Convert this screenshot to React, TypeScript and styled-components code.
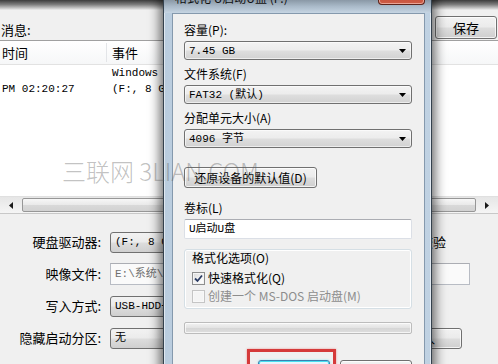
import React from "react";
import styled, { createGlobalStyle } from "styled-components";

const CJK = `"Noto Sans CJK SC", "Liberation Sans", sans-serif`;
const MONO = `"Liberation Mono", "Noto Sans CJK SC", monospace`;

const Global = createGlobalStyle`
  html, body { margin: 0; padding: 0; width: 498px; height: 364px; overflow: hidden; background: #f0f0f0; }
  #root { width: 498px; height: 364px; position: relative; overflow: hidden; }
  * { box-sizing: border-box; }
`;

const Screen = styled.div`
  position: relative;
  width: 498px;
  height: 364px;
  overflow: hidden;
  background: #f0f0f0;
  font-family: ${CJK};
  color: #000;
`;

/* ---------- background window ---------- */
const BackWindow = styled.div`
  display: flex;
  flex-direction: column;
  height: 100%;
`;

const TopStrip = styled.div`
  height: 10px;
  background: linear-gradient(#3c3c3c, #7d7d7d 45%, #d9d9d9 90%, #eeeeee);
`;

const MessageBar = styled.div`
  height: 30px;
  display: flex;
  align-items: flex-end;
  justify-content: space-between;
  padding: 0 1px 1px 1px;
`;

const MsgLabel = styled.span`
  font-size: 13px;
  line-height: 16px;
  margin-bottom: 1px;
`;

const WinButton = styled.div<{ $w: number; $h?: number; $offset?: number }>`
  width: ${(p) => p.$w}px;
  height: ${(p) => p.$h ?? 23}px;
  margin-left: ${(p) => p.$offset ?? 0}px;
  display: flex;
  align-items: center;
  justify-content: center;
  border: 1px solid #707070;
  border-radius: 3px;
  background: linear-gradient(#f2f2f2 0%, #ebebeb 48%, #dddddd 52%, #cfcfcf 100%);
  box-shadow: inset 0 0 0 1px rgba(255, 255, 255, 0.75);
  font-family: ${CJK};
  font-size: 13px;
  line-height: 16px;
  color: #000;
  flex: none;
`;

const LogList = styled.div`
  display: flex;
  flex-direction: column;
  height: 174px;
  border-top: 1px solid #a0a0a0;
  border-bottom: 1px solid #c8c8c8;
  background: #fff;
`;

const LogHeader = styled.div`
  height: 24px;
  display: flex;
  border-bottom: 1px solid #e2e2e2;
  background: linear-gradient(#ffffff, #f6f7f8);
`;

const HeaderCell = styled.div<{ $w?: number }>`
  ${(p) => (p.$w ? `width: ${p.$w}px; flex: none;` : "flex: 1;")}
  display: flex;
  align-items: center;
  padding-left: ${(p) => (p.$w ? 2 : 5)}px;
  font-size: 13px;
  line-height: 16px;
  border-right: ${(p) => (p.$w ? "1px solid #e3e5e8" : "none")};
  margin: 2px 0;
`;

const LogBody = styled.div`
  flex: 1;
  display: flex;
  flex-direction: column;
`;

const LogRow = styled.div`
  display: flex;
  height: 16px;
  font-family: ${MONO};
  font-size: 11px;
  line-height: 16px;
  white-space: nowrap;
`;

const LogTime = styled.div`
  width: 107px;
  flex: none;
  padding-left: 2px;
  overflow: hidden;
`;

const LogEvent = styled.div`
  flex: 1;
  padding-left: 5px;
  overflow: hidden;
`;

const HScroll = styled.div`
  height: 17px;
  display: flex;
  align-items: stretch;
  background: linear-gradient(#e6e6e6, #f5f5f5);
  border-top: 1px solid #e0e0e0;
`;

const ScrollArrow = styled.div`
  width: 22px;
  flex: none;
  display: flex;
  align-items: center;
  justify-content: center;
`;

const ScrollThumb = styled.div`
  flex: 1;
  margin: 1px 0;
  border: 1px solid #979797;
  border-radius: 2px;
  background: linear-gradient(#f7f7f7, #e9e9e9 50%, #d9d9d9 51%, #d2d2d2);
`;

const Form = styled.div`
  display: flex;
  flex-direction: column;
  gap: 10px;
  padding-top: 17px;
`;

const FormRow = styled.div`
  height: 22px;
  display: flex;
  align-items: center;
`;

const FormLabel = styled.div`
  width: 101px;
  flex: none;
  text-align: right;
  font-size: 13px;
  line-height: 16px;
  margin-right: 9px;
`;

const BgCombo = styled.div<{ $w: number }>`
  width: ${(p) => p.$w}px;
  height: 21px;
  flex: none;
  display: flex;
  align-items: center;
  padding-left: 4px;
  border: 1px solid #707070;
  border-radius: 3px;
  background: linear-gradient(#f2f2f2 0%, #ebebeb 48%, #dddddd 52%, #cfcfcf 100%);
  font-family: ${MONO};
  font-size: 11px;
  line-height: 16px;
  white-space: nowrap;
  overflow: hidden;
`;

const BgInput = styled.div<{ $w: number }>`
  width: ${(p) => p.$w}px;
  height: 22px;
  flex: none;
  display: flex;
  align-items: center;
  padding-left: 4px;
  border: 1px solid #b8bcc4;
  border-top-color: #abadb3;
  background: #fafafa;
  color: #707070;
  font-family: ${MONO};
  font-size: 11px;
  line-height: 16px;
  white-space: nowrap;
  overflow: hidden;
`;

const VerifyCheck = styled.div`
  display: flex;
  align-items: center;
  gap: 3px;
  margin-left: 12px;
  font-size: 13px;
  line-height: 16px;
`;

const Watermark = styled.div`
  position: absolute;
  left: 62px;
  top: 156px;
  font-family: ${CJK};
  font-weight: 200;
  font-size: 24px;
  line-height: 30px;
  color: rgba(95, 95, 95, 0.4);
  white-space: nowrap;
  pointer-events: none;
  z-index: 5;
`;

/* ---------- format dialog ---------- */
const Dialog = styled.div`
  position: absolute;
  left: 163px;
  top: -22px;
  width: 269px;
  height: 420px;
  display: flex;
  flex-direction: column;
  padding: 0 6px 0 8px;
  background: linear-gradient(90deg, #b9ccde, #cddcea 50%, #bfd1e2);
  border: 1px solid #34414d;
  border-radius: 7px 7px 0 0;
  box-shadow: 0 0 12px 3px rgba(0, 0, 0, 0.6), inset 0 0 0 1px rgba(255, 255, 255, 0.55);
  z-index: 2;
`;

const TitleBar = styled.div`
  height: 34px;
  flex: none;
  display: flex;
  align-items: flex-start;
  justify-content: space-between;
  margin: 0 -6px 0 -8px;
  padding: 0 6px 0 8px;
  background: linear-gradient(#4d5862 0%, #6d7a86 45%, #a9b9c8 80%, #c6d5e3 100%);
  border-radius: 6px 6px 0 0;
`;

const TitleText = styled.div`
  padding: 12px 0 0 3px;
  font-size: 12px;
  line-height: 14px;
  color: #111;
  white-space: nowrap;
`;

const CloseButton = styled.div`
  width: 47px;
  height: 26px;
  display: flex;
  align-items: center;
  justify-content: center;
  background: linear-gradient(#e9a999 0%, #d8735d 45%, #c5452f 55%, #cd5e47 100%);
  border: 1px solid #5e241b;
  border-top: none;
  border-radius: 0 0 4px 4px;
  box-shadow: inset 0 0 0 1px rgba(255, 210, 200, 0.6);
  color: #fff;
  font-size: 13px;
  font-weight: bold;
  font-family: "DejaVu Sans", sans-serif;
`;

const Panel = styled.div`
  flex: 1;
  display: flex;
  flex-direction: column;
  background: #f0f0f0;
  border: 1px solid #8599ad;
  border-bottom: none;
  padding: 9px 12px 0 11px;
`;

const FieldLabel = styled.div<{ $gap?: number }>`
  font-size: 12px;
  line-height: 14px;
  margin-top: ${(p) => p.$gap ?? 0}px;
  margin-bottom: 4px;
  white-space: nowrap;
`;

const Combo = styled.div`
  height: 19px;
  display: flex;
  align-items: center;
  justify-content: space-between;
  padding: 0 5px 0 4px;
  border: 1px solid #707070;
  border-radius: 3px;
  background: linear-gradient(#f3f3f3 0%, #ececec 48%, #dedede 52%, #d2d2d2 100%);
  box-shadow: inset 0 0 0 1px rgba(255, 255, 255, 0.6);
  font-family: ${MONO};
  font-size: 11px;
  line-height: 14px;
  white-space: nowrap;
`;

const TextBox = styled.div`
  height: 20px;
  display: flex;
  align-items: center;
  padding-left: 4px;
  border: 1px solid #dbdfe6;
  border-top-color: #abadb3;
  background: #fff;
  border-radius: 2px;
  font-family: ${MONO};
  font-size: 11px;
  line-height: 14px;
`;

const ButtonSlot = styled.div<{ $gap: number }>`
  margin-top: ${(p) => p.$gap}px;
  display: flex;
`;

const DlgButton = styled.div<{ $w: number; $h?: number; $default?: boolean }>`
  width: ${(p) => p.$w}px;
  height: ${(p) => p.$h ?? 21}px;
  flex: none;
  display: flex;
  align-items: center;
  justify-content: center;
  border: 1px solid ${(p) => (p.$default ? "#3c7fb1" : "#707070")};
  border-radius: 3px;
  background: ${(p) =>
    p.$default
      ? "linear-gradient(#eaf6fd 0%, #d9f0fc 48%, #bee6fd 52%, #a7d9f5 100%)"
      : "linear-gradient(#f2f2f2 0%, #ebebeb 48%, #dddddd 52%, #cfcfcf 100%)"};
  box-shadow: ${(p) =>
    p.$default ? "inset 0 0 0 1px #48e0f0, 0 0 2px #7fe6f2" : "inset 0 0 0 1px rgba(255,255,255,0.75)"};
  font-size: 12px;
  line-height: 14px;
  white-space: nowrap;
`;

const Group = styled.div`
  margin-top: 10px;
  border: 1px solid #d5dfe5;
  border-radius: 3px;
  box-shadow: inset 0 0 0 1px #fff;
  padding: 1px 0 4px 7px;
  display: flex;
  flex-direction: column;
  gap: 2px;
`;

const GroupLabel = styled.div`
  font-size: 12px;
  line-height: 14px;
  margin-bottom: 3px;
`;

const CheckRow = styled.div<{ $disabled?: boolean }>`
  height: 16px;
  display: flex;
  align-items: center;
  gap: 3px;
  font-size: 12px;
  line-height: 14px;
  white-space: nowrap;
  color: ${(p) => (p.$disabled ? "#8d8d8d" : "#000")};
`;

const CheckBoxFrame = styled.div<{ $disabled?: boolean }>`
  width: 13px;
  height: 13px;
  flex: none;
  display: flex;
  align-items: center;
  justify-content: center;
  border: 1px solid ${(p) => (p.$disabled ? "#c5c5c5" : "#8e8f8f")};
  background: ${(p) =>
    p.$disabled ? "#f4f4f4" : "linear-gradient(135deg, #d8d8d8, #f6f6f6 60%, #ffffff)"};
  box-shadow: inset 0 0 0 1px ${(p) => (p.$disabled ? "#f8f8f8" : "#f4f4f4")};
`;

const Progress = styled.div`
  margin-top: 13px;
  height: 12px;
  border: 1px solid #bcbcbc;
  border-radius: 2px;
  background: linear-gradient(#f3f3f3, #e2e2e2 50%, #d6d6d6 51%, #dedede);
  box-shadow: inset 0 0 0 1px rgba(255, 255, 255, 0.7);
`;

const ButtonRow = styled.div`
  margin-top: 26px;
  display: flex;
  justify-content: flex-end;
  gap: 10px;
`;

const Highlight = styled.div`
  position: relative;
  &::before {
    content: "";
    position: absolute;
    left: -11px;
    top: -11px;
    right: -6px;
    bottom: -12px;
    border: 3px solid #d53a3a;
    box-shadow: 0 0 2px rgba(230, 80, 80, 0.6);
    pointer-events: none;
  }
`;

const Arrow = () => (
  <svg width="7" height="4" viewBox="0 0 7 4">
    <polygon points="0,0 7,0 3.5,4" fill="#000" />
  </svg>
);

const CheckMark = () => (
  <svg width="9" height="9" viewBox="0 0 9 9">
    <path d="M1 4.5 L3.5 7 L8 1.5" stroke="#2b3c64" strokeWidth="1.8" fill="none" />
  </svg>
);

const SmallBox = styled.div`
  width: 13px;
  height: 13px;
  border: 1px solid #8e8f8f;
  background: linear-gradient(135deg, #dcdcdc, #fff);
`;

export default function App() {
  return (
    <>
      <Global />
      <Screen>
        <BackWindow>
          <TopStrip />
          <MessageBar>
            <MsgLabel>消息:</MsgLabel>
            <WinButton $w={62}>保存</WinButton>
          </MessageBar>
          <LogList>
            <LogHeader>
              <HeaderCell $w={107}>时间</HeaderCell>
              <HeaderCell>事件</HeaderCell>
            </LogHeader>
            <LogBody>
              <LogRow>
                <LogTime></LogTime>
                <LogEvent>Windows 7 v6.1 Build 7601 (Service Pack 1)</LogEvent>
              </LogRow>
              <LogRow>
                <LogTime>PM 02:20:27</LogTime>
                <LogEvent>(F:, 8 GB)Kingston DataTraveler 3.0 PMAP</LogEvent>
              </LogRow>
            </LogBody>
            <HScroll>
              <ScrollArrow>
                <svg width="4" height="7" viewBox="0 0 4 7">
                  <polygon points="4,0 4,7 0,3.5" fill="#1a1a1a" />
                </svg>
              </ScrollArrow>
              <ScrollThumb />
              <ScrollArrow>
                <svg width="4" height="7" viewBox="0 0 4 7">
                  <polygon points="0,0 0,7 4,3.5" fill="#1a1a1a" />
                </svg>
              </ScrollArrow>
            </HScroll>
          </LogList>
          <Form>
            <FormRow>
              <FormLabel>硬盘驱动器:</FormLabel>
              <BgCombo $w={282}>(F:, 8 GB)Kingston DataTraveler 3.0</BgCombo>
              <VerifyCheck>
                <SmallBox />
                校验
              </VerifyCheck>
            </FormRow>
            <FormRow>
              <FormLabel>映像文件:</FormLabel>
              <BgInput $w={360}>E:\系统\win7\cn_windows_7_ultimate.iso</BgInput>
            </FormRow>
            <FormRow>
              <FormLabel>写入方式:</FormLabel>
              <BgCombo $w={282}>USB-HDD+</BgCombo>
            </FormRow>
            <FormRow>
              <FormLabel>隐藏启动分区:</FormLabel>
              <BgCombo $w={262}>无</BgCombo>
              <WinButton $w={80} $h={21} $offset={10}>
                写入
              </WinButton>
            </FormRow>
          </Form>
        </BackWindow>

        <Dialog>
          <TitleBar>
            <TitleText>格式化 U启动U盘 (F:)</TitleText>
            <CloseButton>✕</CloseButton>
          </TitleBar>
          <Panel>
            <FieldLabel>容量(P):</FieldLabel>
            <Combo>
              <span>7.45 GB</span>
              <Arrow />
            </Combo>
            <FieldLabel $gap={7}>文件系统(F)</FieldLabel>
            <Combo>
              <span>FAT32 (默认)</span>
              <Arrow />
            </Combo>
            <FieldLabel $gap={7}>分配单元大小(A)</FieldLabel>
            <Combo>
              <span>4096 字节</span>
              <Arrow />
            </Combo>
            <ButtonSlot $gap={19}>
              <DlgButton $w={133}>还原设备的默认值(D)</DlgButton>
            </ButtonSlot>
            <FieldLabel $gap={13}>卷标(L)</FieldLabel>
            <TextBox>U启动U盘</TextBox>
            <Group>
              <GroupLabel>格式化选项(O)</GroupLabel>
              <CheckRow>
                <CheckBoxFrame>
                  <CheckMark />
                </CheckBoxFrame>
                快速格式化(Q)
              </CheckRow>
              <CheckRow $disabled>
                <CheckBoxFrame $disabled />
                创建一个 MS-DOS 启动盘(M)
              </CheckRow>
            </Group>
            <Progress />
            <ButtonRow>
              <Highlight>
                <DlgButton $w={72} $h={23} $default>
                  开始(S)
                </DlgButton>
              </Highlight>
              <DlgButton $w={72} $h={23}>
                关闭(C)
              </DlgButton>
            </ButtonRow>
          </Panel>
        </Dialog>
        <Watermark>三联网 3LIAN.COM</Watermark>
      </Screen>
    </>
  );
}
